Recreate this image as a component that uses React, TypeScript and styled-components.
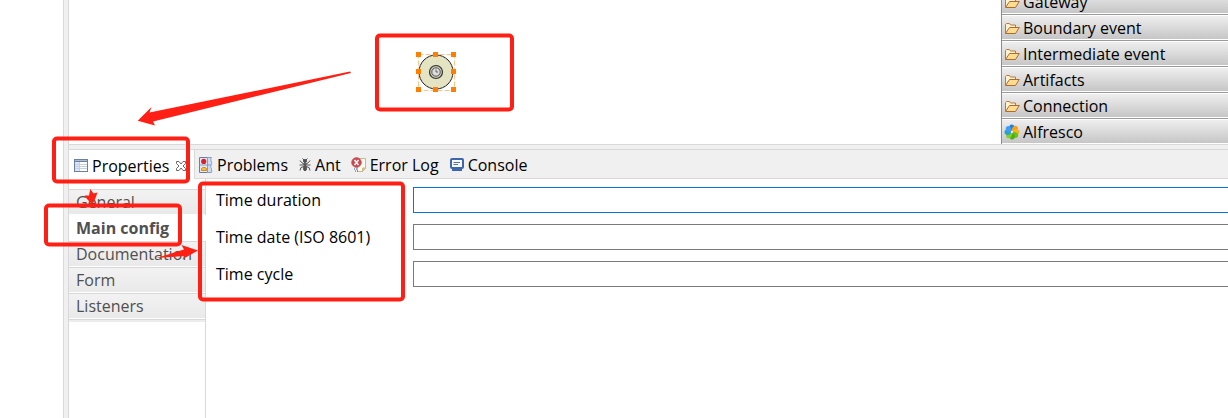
import React from "react";
import styled, { createGlobalStyle } from "styled-components";

const GlobalStyle = createGlobalStyle`
  * { box-sizing: border-box; }
  body {
    margin: 0;
    background: #fff;
    color: #000;
    font-family: "Open Sans", "Noto Sans", sans-serif;
    font-size: 16px;
    line-height: 24px;
  }
  button, input { font: inherit; color: inherit; }
`;

const Workbench = styled.div`
  position: relative;
  display: flex;
  min-height: 100vh;
  padding-left: 63px;
  overflow: hidden;
`;

const Sash = styled.div`
  flex: none;
  width: 6px;
  background: #f0f0f0;
  border: solid #d9d9d9;
  border-width: 0 1px;
`;

const Main = styled.main`
  flex: 1;
  min-width: 0;
  display: flex;
  flex-direction: column;
`;

const Editor = styled.section`
  display: flex;
  height: 144px;
  overflow: hidden;
`;

const Canvas = styled.div`
  position: relative;
  flex: 1;
  min-width: 0;
`;

const TimerNode = styled.svg`
  position: absolute;
  left: 345px;
  top: 50px;
`;

const Palette = styled.nav`
  flex: none;
  width: 227px;
  display: flex;
  flex-direction: column;
  justify-content: flex-end;
  border-left: 1px solid #8c8c8c;
`;

const Drawer = styled.button`
  flex: none;
  display: flex;
  align-items: center;
  gap: 3px;
  height: 26px;
  padding: 0 0 0 2px;
  border: 0;
  border-top: 1px solid #9a9a9a;
  background: linear-gradient(#f0f0f0, #c4c4c4);
  box-shadow: inset 0 1px #fff, inset 0 -1px #fff;
  text-align: left;
`;

const Divider = styled.div`
  height: 6px;
  background: #f0f0f0;
  border: solid #d9d9d9;
  border-width: 1px 0;
`;

const TabBar = styled.div`
  display: flex;
  height: 29px;
`;

const ActiveTab = styled.div`
  flex: none;
  display: flex;
  align-items: center;
  gap: 3px;
  width: 126px;
  padding: 2px 0 0 4px;
  border-right: 1px solid #d9d9d9;
`;

const OtherTabs = styled.div`
  flex: 1;
  display: flex;
  align-items: center;
  gap: 10px;
  padding: 2px 0 0 3px;
  background: #f0f0f0;
  border-bottom: 1px solid #d9d9d9;
`;

const Tab = styled.button`
  display: flex;
  align-items: center;
  gap: 3px;
  padding: 0;
  border: 0;
  background: none;
  white-space: nowrap;
`;

const CloseButton = styled(Tab)`
  margin-left: 3px;
`;

const View = styled.section`
  flex: 1;
  display: flex;
`;

const Sections = styled.nav`
  flex: none;
  width: 137px;
  display: flex;
  flex-direction: column;
  padding-top: 10px;
  background: linear-gradient(#d9d9d9, #d9d9d9) right / 1px 100% no-repeat;
`;

const SectionTab = styled.button<{ $selected?: boolean }>`
  height: 26px;
  padding: 0 0 2px 7px;
  border: 0;
  border-top: 1px solid ${(p) => (p.$selected ? "#fff" : "#d9d9d9")};
  border-right: 1px solid ${(p) => (p.$selected ? "#fff" : "#d9d9d9")};
  background: ${(p) => (p.$selected ? "#fff" : "linear-gradient(#f2f2f2, #e9e9e9)")};
  box-shadow: inset 0 -1px #fff;
  color: #505050;
  font-weight: ${(p) => (p.$selected ? 700 : 400)};
  text-align: left;
`;

const SectionsEnd = styled.div`
  height: 3px;
  margin-right: 1px;
  border-top: 1px solid #d9d9d9;
  background: #ececec;
`;

const Form = styled.form`
  flex: 1;
  min-width: 0;
  display: flex;
  flex-direction: column;
  gap: 11px;
  padding: 8px 0 0 10px;
`;

const Field = styled.label`
  display: grid;
  grid-template-columns: 197px 1fr;
  align-items: center;
`;

const TextBox = styled.input`
  width: 100%;
  height: 26px;
  padding: 0 4px;
  border: 1px solid #7a7a7a;
  border-right: 0;
  border-radius: 0;
  background: #fff;
  outline: none;
  &[data-current="true"] { border-color: #0078d7; }
`;

const Markup = styled.svg`
  position: absolute;
  left: 0;
  top: 0;
  pointer-events: none;
`;

const Icon = styled.svg`
  flex: none;
  display: block;
`;

const FolderIcon = () => (
  <Icon width="16" height="16" viewBox="0 0 16 16" strokeLinejoin="round">
    <path d="M1.500 13V4.500L2.500 3.500H5.500L6.500 5H11.500V7.500" fill="#fdf3d3" stroke="#b9783c" />
    <path d="M1.500 13.500L5.500 7.500H15.300L11.500 13.500Z" fill="#fbdc90" stroke="#b26a2b" />
  </Icon>
);

const petals = ["#1d7fe8", "#f7a21b", "#f5b623", "#6cc21c", "#4fae12", "#7fd02c", "#2a9fd6", "#3f9df5"];
const AlfrescoIcon = () => (
  <Icon width="16" height="16" viewBox="0 0 16 16">
    {petals.map((fill, i) => (
      <path key={fill} d="M8 8C4 5.500 4.500 .8 7.500 .4C11 .4 11.500 4 8 8Z" fill={fill} transform={`rotate(${i * 45} 8 8)`} />
    ))}
    <circle cx="8" cy="8" r="1.200" fill="#e8f6dc" />
  </Icon>
);

const TableIcon = () => (
  <Icon width="16" height="16" viewBox="0 0 16 16" shapeRendering="crispEdges">
    <rect x="1" y="1" width="14" height="13" fill="#6e7f9f" />
    <rect x="2" y="4" width="12" height="9" fill="#fff" />
    <rect x="2" y="2" width="12" height="1" fill="#a9bbd8" />
    <rect x="2" y="4" width="4" height="9" fill="#dbe5f4" />
    <path d="M6.500 4V13M2 6.500H14M2 8.500H14M2 10.500H14" stroke="#c3d0e4" />
  </Icon>
);

const CloseIcon = () => (
  <Icon width="12" height="12" viewBox="0 0 12 12">
    <path d="M1.500 1.500H4L6 4L8 1.500H10.500V3.500L8 6L10.500 8.500V10.500H8L6 8L4 10.500H1.500V8.500L4 6L1.500 3.500Z" fill="#fff" stroke="#6a6a6a" />
  </Icon>
);

const ProblemsIcon = () => (
  <Icon width="16" height="16" viewBox="0 0 16 16">
    <path d="M1.500 .5H9.500V15.500H1.500Z" fill="#dfe8f5" stroke="#6e7ba0" />
    <path d="M9.500 .5H13.500C11.500 3 14.500 5 13.500 7.500C11.500 10 14.500 12 13.500 15.500H9.500Z" fill="#cfdcf0" stroke="#8b9cc0" />
    <path d="M1.500 8H13" stroke="#8b9cc0" />
    <circle cx="5.700" cy="4.400" r="2.600" fill="#d8232f" />
    <path d="M3.500 13.500V11.500L5 10.500H7L8.500 11.500V13.500Z" fill="#f6c33c" stroke="#d98a1c" />
  </Icon>
);

const AntIcon = () => (
  <Icon width="14" height="16" viewBox="0 0 14 16" fill="#505050" stroke="#505050">
    <circle cx="7" cy="4" r="1.500" />
    <ellipse cx="7" cy="7.500" rx="1" ry="1.500" />
    <ellipse cx="7" cy="11.500" rx="1.500" ry="2.200" />
    <path d="M6 3L4.500 1.500M8 3L9.500 1.500M6 7L3.500 5.500L2 3.500M8 7L10.500 5.500L12 3.500M6 8H1.500M8 8H12.500M6 9.500L3 10.500L2 13.500M8 9.500L11 10.500L12 13.500" fill="none" />
  </Icon>
);

const ErrorLogIcon = () => (
  <Icon width="16" height="16" viewBox="0 0 16 16">
    <path d="M6.500 1.500H14.500V11L11.500 14.500H6.500Z" fill="#fdfaf0" stroke="#c9b98a" />
    <path d="M14.500 11H11.500V14.500Z" fill="#e7cf98" stroke="#c9b98a" />
    <circle cx="5.500" cy="5.500" r="4.700" fill="#d4474e" stroke="#b9434a" />
    <path d="M3.500 3L7.500 8M7.500 3L3.500 8" stroke="#fff" strokeWidth="1.500" />
    <path d="M3 12H4M5 12H6M4 14H5M6 14H7" stroke="#3b5f8f" />
  </Icon>
);

const ConsoleIcon = () => (
  <Icon width="16" height="16" viewBox="0 0 16 16">
    <rect x="2" y="2" width="12" height="9" rx="1" fill="#f4f8ff" stroke="#3d66ad" strokeWidth="2" />
    <path d="M4.500 5.500H11M4.500 7.500H9" stroke="#5b6f96" />
    <path d="M3 13H13" stroke="#3d66ad" strokeWidth="2" />
  </Icon>
);

const handles = [[4, 5], [21, 5], [39, 5], [4, 22], [39, 22], [4, 40], [21, 40], [39, 40]];

const drawers = ["Gateway", "Boundary event", "Intermediate event", "Artifacts", "Connection"];
const sections = ["General", "Main config", "Documentation", "Form", "Listeners"];
const fields = ["Time duration", "Time date (ISO 8601)", "Time cycle"];

export default function App() {
  return (
    <Workbench>
      <GlobalStyle />
      <Sash />
      <Main>
        <Editor>
          <Canvas>
            <TimerNode width="44" height="46" viewBox="0 0 44 46">
              <circle cx="22" cy="22" r="17" fill="#e4e4c2" stroke="#222" />
              <rect x="4.500" y="4.500" width="36" height="36" fill="none" stroke="#ffc48a" strokeDasharray="5 2" />
              <circle cx="22" cy="22" r="6.500" fill="#c9c9b4" stroke="#333" strokeWidth="1.200" />
              <circle cx="22" cy="22" r="4.200" fill="#ddd" stroke="#555" />
              <path d="M22 19.500V22H24" fill="none" stroke="#666" />
              {handles.map(([x, y]) => (
                <rect key={`${x}-${y}`} x={x - 2} y={y - 3} width="5" height="5" fill="#ff8000" />
              ))}
            </TimerNode>
          </Canvas>
          <Palette aria-label="Palette">
            {drawers.map((name) => (
              <Drawer key={name} type="button"><FolderIcon />{name}</Drawer>
            ))}
            <Drawer type="button"><AlfrescoIcon />Alfresco</Drawer>
          </Palette>
        </Editor>
        <Divider />
        <TabBar>
          <ActiveTab>
            <Tab type="button"><TableIcon />Properties</Tab>
            <CloseButton type="button" aria-label="Close"><CloseIcon /></CloseButton>
          </ActiveTab>
          <OtherTabs>
            <Tab type="button"><ProblemsIcon />Problems</Tab>
            <Tab type="button"><AntIcon />Ant</Tab>
            <Tab type="button"><ErrorLogIcon />Error Log</Tab>
            <Tab type="button"><ConsoleIcon />Console</Tab>
          </OtherTabs>
        </TabBar>
        <View>
          <Sections aria-label="Property sections">
            {sections.map((name) => (
              <SectionTab key={name} type="button" $selected={name === "Main config"}>{name}</SectionTab>
            ))}
            <SectionsEnd />
          </Sections>
          <Form>
            {fields.map((name, i) => (
              <Field key={name}>
                {name}
                <TextBox type="text" data-current={i === 0} />
              </Field>
            ))}
          </Form>
        </View>
      </Main>
      <Markup width="520" height="310" viewBox="0 0 520 310" aria-hidden="true">
        <g fill="none" stroke="#ff1f14" strokeWidth="4">
          <rect x="377" y="35.500" width="135" height="74" rx="3" />
          <rect x="54" y="138.500" width="134" height="43" rx="3" />
          <rect x="46" y="205.500" width="134" height="39" rx="3" />
          <rect x="200" y="183.500" width="203" height="116" rx="3" />
        </g>
        <g fill="#ff1f14">
          <path d="M137.700 120.700L151.500 107L149.500 112.500L350 71.500L351 73L153 121.500L155 125.500Z" />
          <path d="M90.300 189L93.500 193.500L97.500 192.500L95.500 198L92.500 204.500L87 199L84.500 195.500L89 195.500Z" />
          <path d="M156.500 258L184 249.500L181.500 245L198 250.500L182 259.500L185 256Z" />
        </g>
      </Markup>
    </Workbench>
  );
}
